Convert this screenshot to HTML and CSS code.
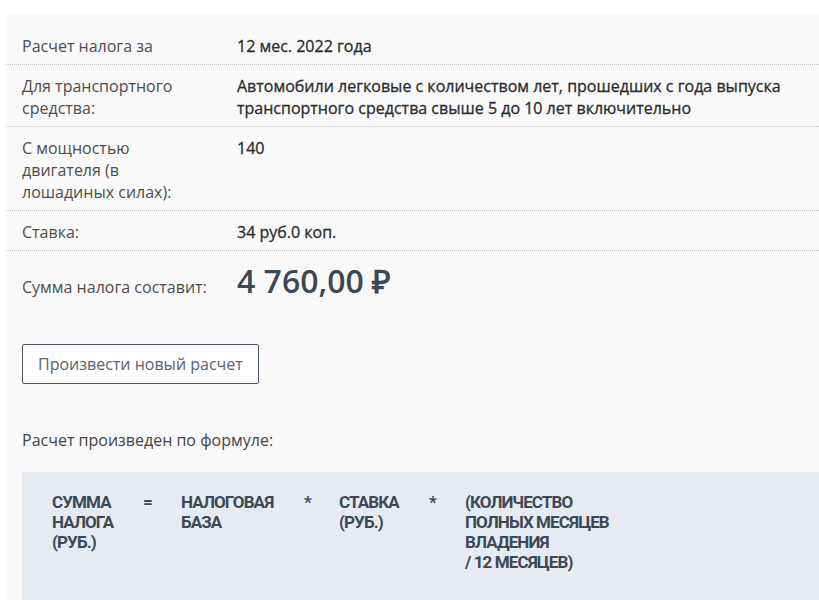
FILE: index.html
```html
<!DOCTYPE html>
<html>
<head>
  <meta charset="utf-8">
  <title>Расчет транспортного налога</title>
  <link rel="stylesheet" href="styles.css">
</head>
<body>
  <div class="result">
    <div class="row">
      <div class="label">Расчет налога за</div>
      <div class="value">12 мес. 2022 года</div>
    </div>
    <div class="row">
      <div class="label">Для транспортного средства:</div>
      <div class="value">Автомобили легковые с количеством лет, прошедших с года выпуска транспортного средства свыше 5 до 10 лет включительно</div>
    </div>
    <div class="row">
      <div class="label">С мощностью двигателя (в лошадиных силах):</div>
      <div class="value">140</div>
    </div>
    <div class="row">
      <div class="label">Ставка:</div>
      <div class="value">34 руб.0 коп.</div>
    </div>
    <div class="total">
      <div class="label">Сумма налога составит:</div>
      <div class="total-sum">4 760,00 ₽</div>
    </div>

    <button class="btn-new" type="button">Произвести новый расчет</button>

    <p class="formula-title">Расчет произведен по формуле:</p>

    <div class="formula">
      <div class="f-item">Сумма<br>налога<br>(руб.)</div>
      <div class="f-op">=</div>
      <div class="f-item">Налоговая<br>база</div>
      <div class="f-op">*</div>
      <div class="f-item">Ставка<br>(руб.)</div>
      <div class="f-op">*</div>
      <div class="f-item">(Количество<br>полных месяцев<br>владения<br>/ 12 месяцев)</div>
    </div>
  </div>
</body>
</html>
```

FILE: styles.css
```css
body {
  margin: 0;
  background: #fff;
  font-family: "Open Sans", sans-serif;
  font-size: 16px;
  color: #444;
  overflow: hidden;
}

.result {
  margin: 14px 0 0 6px;
  padding-top: 11px;
  background: #f9f9f9;
  min-height: 600px;
}

.row {
  display: grid;
  grid-template-columns: 215px 1fr;
  padding: 10px 20px 7px 16px;
  line-height: 22px;
  border-bottom: 1px dotted #c4c4c4;
}

.label {
  color: #4d4d4d;
}

.row .label {
  padding-right: 40px;
}

/* values are a touch heavier than labels */
.value {
  color: #2b2b2b;
  -webkit-text-stroke: 0.3px #2b2b2b;
}

.total {
  display: grid;
  grid-template-columns: 215px 1fr;
  align-items: baseline;
  padding: 10px 16px 0;
  line-height: 22px;
}

.total-sum {
  font-size: 32px;
  font-weight: 600;
  color: #3d4852;
  line-height: 40px;
}

.btn-new {
  display: block;
  margin: 43px 0 0 16px;
  padding: 0 15px;
  height: 40px;
  border: 1px solid #4b5966;
  border-radius: 2px;
  background: #fff;
  font-family: "Open Sans", sans-serif;
  font-size: 16px;
  color: #59636e;
  cursor: pointer;
}

.formula-title {
  margin: 45px 0 0 16px;
  line-height: 22px;
}

.formula {
  display: grid;
  grid-template-columns: 89px 40px 121px 37px 88px 38px 1fr;
  margin: 21px 0 0 16px;
  padding: 20px 30px 30px;
  min-height: 120px;
  background: #e6ebf2;
  font-family: Roboto, "DejaVu Sans", sans-serif;
  font-weight: bold;
  font-size: 17px;
  letter-spacing: -0.9px;
  line-height: 20px;
  text-transform: uppercase;
  color: #3d4852;
}

.f-op {
  padding-left: 2px;
}
```
